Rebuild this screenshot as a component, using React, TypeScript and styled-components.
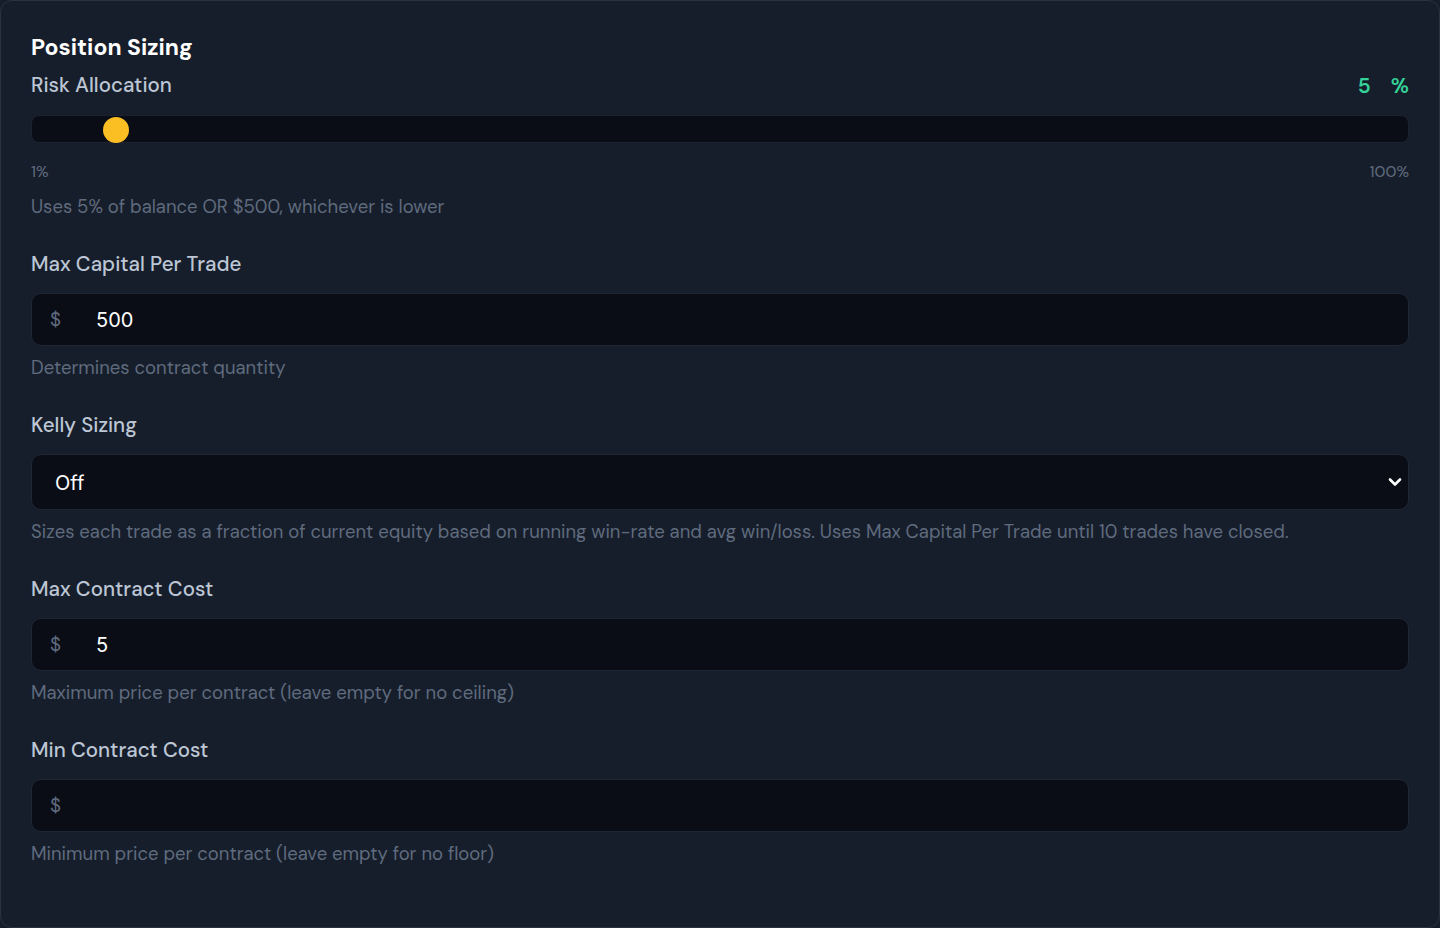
import styled, { createGlobalStyle } from "styled-components";

const GlobalStyle = createGlobalStyle`
  * { box-sizing: border-box; }
  body {
    margin: 0;
    background: #171e2b;
    font-family: "DM Sans", Inter, "Noto Sans", sans-serif;
  }
`;

const TextField = ({ value }: { value?: string }) => (
  <StyledInputBox>
    <span className="prefix">$</span>
    <span className="value">{value}</span>
  </StyledInputBox>
);

const risk = 5;

const App = () => {
  return (
    <>
      <GlobalStyle />
      <StyledCard>
        <h2>Position Sizing</h2>

        <Field>
          <div className="row">
            <Label>Risk Allocation</Label>
            <div className="pct">
              <span>{risk}</span>
              <span>%</span>
            </div>
          </div>
          <StyledTrack>
            <div className="thumb" style={{ left: `${71 + (risk - 5) * 13.6}px` }} />
          </StyledTrack>
          <div className="scale">
            <span>1%</span>
            <span>100%</span>
          </div>
          <Help>Uses 5% of balance OR $500, whichever is lower</Help>
        </Field>

        <Field>
          <Label>Max Capital Per Trade</Label>
          <TextField value="500" />
          <Help>Determines contract quantity</Help>
        </Field>

        <Field>
          <Label>Kelly Sizing</Label>
          <StyledSelect>
            <span>Off</span>
            <svg width="14" height="10" viewBox="0 0 14 10">
              <path d="M2 2.5 L7 7.5 L12 2.5" fill="none" stroke="#fff" strokeWidth="2.6" strokeLinecap="round" strokeLinejoin="round" />
            </svg>
          </StyledSelect>
          <Help>
            Sizes each trade as a fraction of current equity based on running win-rate and avg win/loss. Uses Max
            Capital Per Trade until 10 trades have closed.
          </Help>
        </Field>

        <Field>
          <Label>Max Contract Cost</Label>
          <TextField value="5" />
          <Help>Maximum price per contract (leave empty for no ceiling)</Help>
        </Field>

        <Field>
          <Label>Min Contract Cost</Label>
          <TextField />
          <Help>Minimum price per contract (leave empty for no floor)</Help>
        </Field>
      </StyledCard>
    </>
  );
};

export default App;

const StyledCard = styled.main`
  width: 1440px;
  min-height: 928px;
  border: 1px solid #2a3140;
  border-radius: 12px;
  background: #171e2b;
  padding: 31px 30px 40px 30px;
  display: flex;
  flex-direction: column;
  gap: 30px;

  h2 {
    margin: 0 0 -21px;
    color: #ffffff;
    font-size: 23px;
    font-weight: 700;
    line-height: 30px;
  }

  .row {
    display: flex;
    align-items: center;
    justify-content: space-between;
    height: 28px;
  }

  .pct {
    display: flex;
    gap: 20px;
    color: #34d399;
    font-size: 21px;
    font-weight: 600;
    line-height: 28px;
    padding-top: 2px;
  }

  .scale {
    display: flex;
    justify-content: space-between;
    color: #5f6b7e;
    font-size: 16px;
    line-height: 20px;
    margin-top: 19px;
    margin-bottom: 3px;
  }
`;

const Field = styled.section`
  display: flex;
  flex-direction: column;
`;

const Label = styled.div`
  color: #bcc6d5;
  font-size: 20.5px;
  font-weight: 500;
  line-height: 28px;
  margin-bottom: 15px;

  .row & {
    margin-bottom: 0;
  }
`;

const Help = styled.p`
  margin: 9px 0 0;
  color: #5f6b7e;
  font-size: 18.5px;
  line-height: 26px;
`;

const StyledTrack = styled.div`
  position: relative;
  margin-top: 16px;
  height: 28px;
  border: 1px solid #1c2230;
  border-radius: 8px;
  background: #0a0d16;

  .thumb {
    position: absolute;
    top: 1px;
    width: 26px;
    height: 26px;
    border-radius: 50%;
    background: #fbbf24;
  }
`;

const StyledInputBox = styled.div`
  display: flex;
  align-items: center;
  height: 53px;
  border: 1px solid #1f2634;
  border-radius: 10px;
  background: #0a0d16;
  padding-left: 18px;

  .prefix {
    width: 46px;
    color: #5f6b7e;
    font-size: 19px;
  }

  .value {
    color: #ffffff;
    font-family: Inter, "Noto Sans", sans-serif;
    font-size: 20px;
  }
`;

const StyledSelect = styled.div`
  display: flex;
  align-items: center;
  justify-content: space-between;
  height: 56px;
  border: 1px solid #1f2634;
  border-radius: 10px;
  background: #0a0d16;
  padding: 0 6px 0 23px;
  color: #ffffff;
  font-family: Inter, "Noto Sans", sans-serif;
  font-size: 20px;

  span {
    margin-top: 2px;
  }
`;
